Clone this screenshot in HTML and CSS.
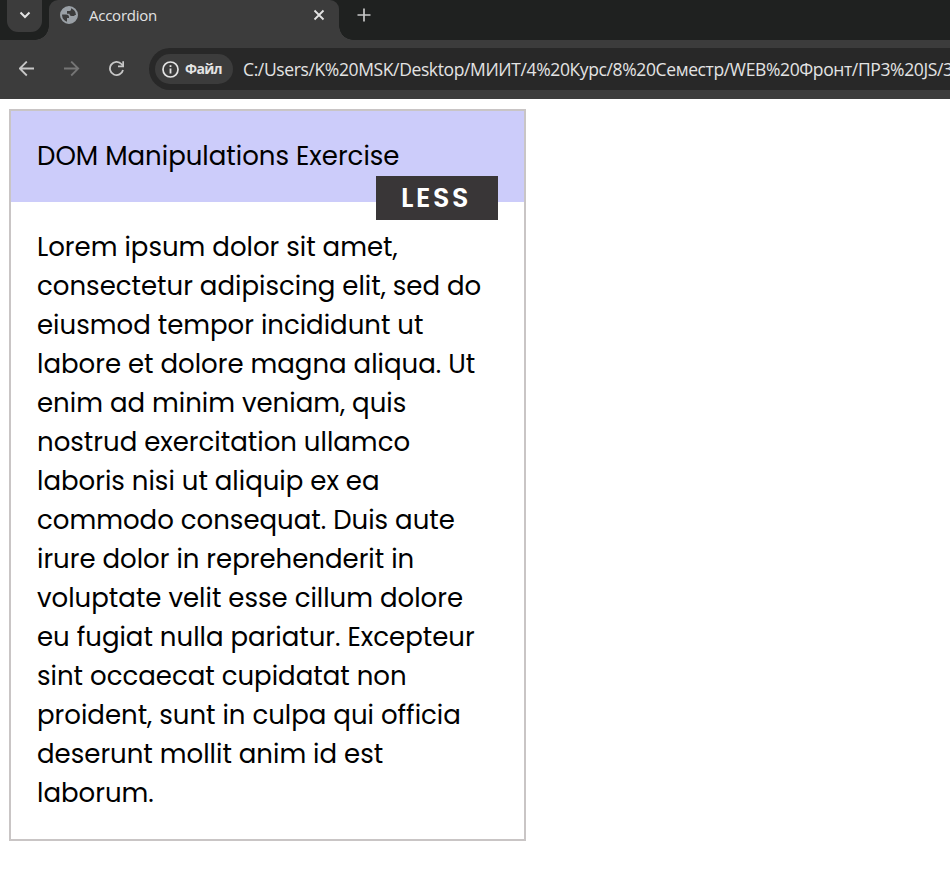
FILE: index.html
```html
<!DOCTYPE html>
<html lang="ru">
<head>
<meta charset="utf-8">
<title>Accordion</title>
<link rel="stylesheet" href="styles.css">
</head>
<body>
<header class="browser">
  <div class="tabs">
    <div class="tab-search">
      <svg width="12" height="8" viewBox="0 0 12 8"><path d="M1.500 1.500 6 6l4.500-4.500" fill="none" stroke="#e3e3e3" stroke-width="2"/></svg>
    </div>
    <div class="tab">
      <svg class="globe" width="18" height="18" viewBox="0 0 18 18"><circle cx="9" cy="9" r="8" fill="#3c3c3c" stroke="#9aa0a6" stroke-width="2"/><path d="M9 1C4 1 1 4.500 1 8.500h5c2 0 3 1 3 2.500v1h-2v4.700l2 .3c5 0 8-4 8-8h-2.500V10h-3c-1.500 0-2-1-2-2.200H7V5h2.500c1 0 1.500-1 1.500-1.500V1.300z" fill="#9aa0a6"/></svg>
      <span class="tab-title" data-width="68">Accordion</span>
      <svg class="close" width="12" height="12" viewBox="0 0 12 12"><path d="m1.500 1.500 9 9m0-9-9 9" stroke="#e3e3e3" stroke-width="1.800"/></svg>
    </div>
    <svg class="plus" width="14" height="14" viewBox="0 0 14 14"><path d="M7 .5v13M.5 7h13" stroke="#c7c7c7" stroke-width="1.700"/></svg>
  </div>
  <div class="toolbar">
    <svg class="nav" width="16" height="16" viewBox="0 0 16 16"><path d="M15 7.500H1M7.800.5l-7 7 7 7" fill="none" stroke="#c7c7c7" stroke-width="1.800"/></svg>
    <svg class="nav" width="16" height="16" viewBox="0 0 16 16"><path d="M0 7.500h14M7.200.5l7 7-7 7" fill="none" stroke="#757575" stroke-width="1.800"/></svg>
    <svg class="nav" width="16" height="16" viewBox="0 0 16 16"><path d="M14 9A6.600 6.600 0 1 1 12.400 3l1.500 1.700" fill="none" stroke="#c7c7c7" stroke-width="1.800"/><path d="M15 .2v6H9V4.500h4.300V.2z" fill="#c7c7c7"/></svg>
    <div class="omnibox">
      <div class="chip">
        <svg width="17" height="17" viewBox="0 0 17 17"><circle cx="8.500" cy="8.500" r="7.500" fill="none" stroke="#e3e3e3" stroke-width="1.700"/><path d="M8.500 7.500v5M8.500 4.300v1.800" stroke="#e3e3e3" stroke-width="1.800"/></svg>
        <span class="chip-label" data-width="37">Файл</span>
      </div>
      <div class="url"><span data-width="700">C:/Users/K%20MSK/Desktop/МИИТ/4%20Курс/8%20Семестр/WEB%20Фронт/ПР3%20JS/</span><span>3</span></div>
    </div>
  </div>
</header>
<main class="accordion">
  <div class="heading">
    DOM Manipulations Exercise
    <button class="toggle"><span data-width="70">LESS</span></button>
  </div>
  <div class="content">Lorem ipsum dolor sit amet, consectetur adipiscing elit, sed do eiusmod tempor incididunt ut labore et dolore magna aliqua. Ut enim ad minim veniam, quis nostrud exercitation ullamco laboris nisi ut aliquip ex ea commodo consequat. Duis aute irure dolor in reprehenderit in voluptate velit esse cillum dolore eu fugiat nulla pariatur. Excepteur sint occaecat cupidatat non proident, sunt in culpa qui officia deserunt mollit anim id est laborum.</div>
</main>
<script src="fit.js"></script>
</body>
</html>
```
FILE: styles.css
```css
* { box-sizing: border-box; }
body { margin: 0; background: #fff; overflow: hidden; color: #000; }
svg { display: block; flex: none; }
.browser { font-family: "Open Sans", "Noto Sans", sans-serif; color: #e3e3e3; }
.tabs { height: 40px; background: #1f2120; display: flex; }
.tab-search { width: 35px; height: 32px; margin-left: 7px; border-radius: 0 0 11px 11px; background: #3c3c3c; display: flex; align-items: center; justify-content: center; padding-bottom: 2px; }
.tab { position: relative; width: 290px; height: 40px; margin-left: 7px; padding: 0 14px 10px 11px; border-radius: 9px 9px 0 0; background: #3c3c3c; display: flex; align-items: center; }
.tab::before, .tab::after { content: ""; position: absolute; bottom: 0; width: 14px; height: 14px; }
.tab::before { left: -14px; background: radial-gradient(circle at 0 0, transparent 13.5px, #3c3c3c 14px); }
.tab::after { right: -14px; background: radial-gradient(circle at 100% 0, transparent 13.5px, #3c3c3c 14px); }
.tab-title { margin-left: 11px; font-size: 15px; line-height: 20px; white-space: nowrap; }
.close { margin-left: auto; }
.plus { margin: 8px 0 0 18px; }
.toolbar { height: 59px; background: #3c3c3c; display: flex; align-items: center; padding: 0 0 1px 19px; }
.nav { margin-right: 29px; }
.omnibox { flex: 1; min-width: 0; height: 42px; margin-left: -5px; padding-left: 6px; border-radius: 21px 0 0 21px; background: #282828; display: flex; align-items: center; }
.chip { width: 78px; height: 30px; flex: none; padding-left: 7px; border-radius: 15px; background: #3c3c3c; display: flex; align-items: center; gap: 6px; }
.chip-label { font-size: 14px; font-weight: 700; line-height: 20px; }
.url { margin-left: 10px; font-size: 17.5px; line-height: 24px; white-space: nowrap; overflow: hidden; }
.accordion { width: 517px; margin: 10px 0 0 9px; border: 2px solid #c9c5c5; font-family: Poppins, Inter, sans-serif; font-size: 26px; line-height: 39px; }
.heading { position: relative; padding: 26px; background: #ccccfa; }
.content { padding: 26px; }
.toggle { position: absolute; right: 26px; top: 65px; width: 122px; height: 44px; padding: 0 0 0 25px; border: 0; background: #393637; color: #fff; font: 600 27px/44px Poppins, Roboto, sans-serif; text-align: left; }
```
FILE: fit.js
```javascript
// Spread the tracking of each measured run so it fills its set width.
document.querySelectorAll("[data-width]").forEach(function (el) {
  var target = Number(el.dataset.width);
  var gap = target - el.getBoundingClientRect().width;
  el.style.letterSpacing = gap / el.textContent.length + "px";
});
```
